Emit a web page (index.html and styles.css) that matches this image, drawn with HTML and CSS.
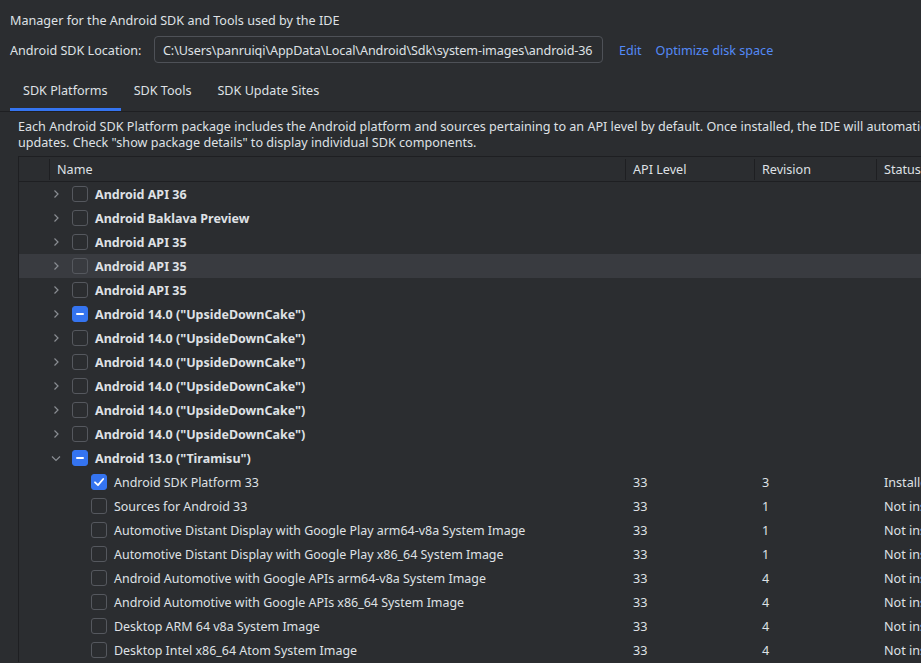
FILE: index.html
```html
<!DOCTYPE html>
<html lang="en">
<head>
<meta charset="utf-8">
<title>Android SDK</title>
<link rel="stylesheet" href="styles.css">
</head>
<body>
<div class="window">
  <p class="intro">Manager for the Android SDK and Tools used by the IDE</p>
  <div class="loc-row">
    <span class="loc-label">Android SDK Location:</span>
    <div class="path">C:\Users\panruiqi\AppData\Local\Android\Sdk\system-images\android-36</div>
    <a class="link edit">Edit</a>
    <a class="link">Optimize disk space</a>
  </div>
  <div class="tabs">
    <div class="tab active">SDK Platforms</div>
    <div class="tab">SDK Tools</div>
    <div class="tab">SDK Update Sites</div>
  </div>
  <p class="desc">Each Android SDK Platform package includes the Android platform and sources pertaining to an API level by default. Once installed, the IDE will automatically check for updates. Check "show package details" to display individual SDK components.</p>
  <div class="table">
    <div class="row head">
      <div class="hcell first"></div>
      <div class="hcell">Name</div>
      <div class="hcell">API Level</div>
      <div class="hcell">Revision</div>
      <div class="hcell">Status</div>
    </div>

    <div class="row">
      <div></div>
      <div class="name group"><svg class="chev" viewBox="0 0 12 12"><path d="M4.5 2.5 L8 6 L4.5 9.5"/></svg><span class="cb"></span><b>Android API 36</b></div>
      <div></div><div></div><div></div>
    </div>
    <div class="row">
      <div></div>
      <div class="name group"><svg class="chev" viewBox="0 0 12 12"><path d="M4.5 2.5 L8 6 L4.5 9.5"/></svg><span class="cb"></span><b>Android Baklava Preview</b></div>
      <div></div><div></div><div></div>
    </div>
    <div class="row">
      <div></div>
      <div class="name group"><svg class="chev" viewBox="0 0 12 12"><path d="M4.5 2.5 L8 6 L4.5 9.5"/></svg><span class="cb"></span><b>Android API 35</b></div>
      <div></div><div></div><div></div>
    </div>
    <div class="row hover">
      <div></div>
      <div class="name group"><svg class="chev" viewBox="0 0 12 12"><path d="M4.5 2.5 L8 6 L4.5 9.5"/></svg><span class="cb"></span><b>Android API 35</b></div>
      <div></div><div></div><div></div>
    </div>
    <div class="row">
      <div></div>
      <div class="name group"><svg class="chev" viewBox="0 0 12 12"><path d="M4.5 2.5 L8 6 L4.5 9.5"/></svg><span class="cb"></span><b>Android API 35</b></div>
      <div></div><div></div><div></div>
    </div>
    <div class="row">
      <div></div>
      <div class="name group"><svg class="chev" viewBox="0 0 12 12"><path d="M4.5 2.5 L8 6 L4.5 9.5"/></svg><span class="cb on minus"></span><b>Android 14.0 ("UpsideDownCake")</b></div>
      <div></div><div></div><div></div>
    </div>
    <div class="row">
      <div></div>
      <div class="name group"><svg class="chev" viewBox="0 0 12 12"><path d="M4.5 2.5 L8 6 L4.5 9.5"/></svg><span class="cb"></span><b>Android 14.0 ("UpsideDownCake")</b></div>
      <div></div><div></div><div></div>
    </div>
    <div class="row">
      <div></div>
      <div class="name group"><svg class="chev" viewBox="0 0 12 12"><path d="M4.5 2.5 L8 6 L4.5 9.5"/></svg><span class="cb"></span><b>Android 14.0 ("UpsideDownCake")</b></div>
      <div></div><div></div><div></div>
    </div>
    <div class="row">
      <div></div>
      <div class="name group"><svg class="chev" viewBox="0 0 12 12"><path d="M4.5 2.5 L8 6 L4.5 9.5"/></svg><span class="cb"></span><b>Android 14.0 ("UpsideDownCake")</b></div>
      <div></div><div></div><div></div>
    </div>
    <div class="row">
      <div></div>
      <div class="name group"><svg class="chev" viewBox="0 0 12 12"><path d="M4.5 2.5 L8 6 L4.5 9.5"/></svg><span class="cb"></span><b>Android 14.0 ("UpsideDownCake")</b></div>
      <div></div><div></div><div></div>
    </div>
    <div class="row">
      <div></div>
      <div class="name group"><svg class="chev" viewBox="0 0 12 12"><path d="M4.5 2.5 L8 6 L4.5 9.5"/></svg><span class="cb"></span><b>Android 14.0 ("UpsideDownCake")</b></div>
      <div></div><div></div><div></div>
    </div>
    <div class="row">
      <div></div>
      <div class="name group"><svg class="chev" viewBox="0 0 12 12"><path d="M2 4.5 L6 8.5 L10 4.5"/></svg><span class="cb on minus"></span><b>Android 13.0 ("Tiramisu")</b></div>
      <div></div><div></div><div></div>
    </div>

    <div class="row">
      <div></div>
      <div class="name child"><span class="cb on"><svg viewBox="0 0 16 16"><path d="M4 8.3 L7 11.2 L12.2 5"/></svg></span>Android SDK Platform 33</div>
      <div class="cell">33</div><div class="cell">3</div><div class="cell">Installed</div>
    </div>
    <div class="row">
      <div></div>
      <div class="name child"><span class="cb"></span>Sources for Android 33</div>
      <div class="cell">33</div><div class="cell">1</div><div class="cell">Not installed</div>
    </div>
    <div class="row">
      <div></div>
      <div class="name child"><span class="cb"></span>Automotive Distant Display with Google Play arm64-v8a System Image</div>
      <div class="cell">33</div><div class="cell">1</div><div class="cell">Not installed</div>
    </div>
    <div class="row">
      <div></div>
      <div class="name child"><span class="cb"></span>Automotive Distant Display with Google Play x86_64 System Image</div>
      <div class="cell">33</div><div class="cell">1</div><div class="cell">Not installed</div>
    </div>
    <div class="row">
      <div></div>
      <div class="name child"><span class="cb"></span>Android Automotive with Google APIs arm64-v8a System Image</div>
      <div class="cell">33</div><div class="cell">4</div><div class="cell">Not installed</div>
    </div>
    <div class="row">
      <div></div>
      <div class="name child"><span class="cb"></span>Android Automotive with Google APIs x86_64 System Image</div>
      <div class="cell">33</div><div class="cell">4</div><div class="cell">Not installed</div>
    </div>
    <div class="row">
      <div></div>
      <div class="name child"><span class="cb"></span>Desktop ARM 64 v8a System Image</div>
      <div class="cell">33</div><div class="cell">4</div><div class="cell">Not installed</div>
    </div>
    <div class="row">
      <div></div>
      <div class="name child"><span class="cb"></span>Desktop Intel x86_64 Atom System Image</div>
      <div class="cell">33</div><div class="cell">4</div><div class="cell">Not installed</div>
    </div>
  </div>
</div>
</body>
</html>
```

FILE: styles.css
```css
* { box-sizing: border-box; }
html, body {
  margin: 0;
  padding: 0;
  background: #2b2d30;
}
body {
  font-family: "Noto Sans", "Liberation Sans", sans-serif;
  font-size: 12.6px;
  color: #dfe1e5;
}
.window {
  width: 921px;
  height: 663px;
  overflow: hidden;
  padding-left: 10px;
  padding-top: 13px;
}
.intro {
  margin: 0;
  line-height: 16px;
  height: 16px;
  white-space: nowrap;
}
.loc-row {
  margin-top: 7px;
  display: flex;
  align-items: center;
  height: 27px;
  white-space: nowrap;
}
.loc-label {
  width: 144px;
  flex: none;
  padding-top: 1px;
}
.path {
  width: 449px;
  flex: none;
  height: 27px;
  border: 1px solid #4e5157;
  border-radius: 4px;
  padding: 1px 0 0 8px;
  line-height: 25px;
  overflow: hidden;
  letter-spacing: -0.1px;
}
.link {
  color: #548af7;
  cursor: pointer;
  padding-top: 1px;
}
.link.edit {
  margin-left: 16px;
  margin-right: 14px;
}
.tabs {
  margin-top: 8px;
  margin-left: -10px;
  padding-left: 10px;
  display: flex;
  height: 41px;
  border-bottom: 1px solid #1e1f22;
}
.tab {
  padding: 2px 13px 0;
  line-height: 36px;
  height: 40px;
  border-bottom: 3px solid transparent;
  white-space: nowrap;
}
.tab.active { border-bottom-color: #3574f0; }
.desc {
  margin: 7px 0 0 8px;
  line-height: 16px;
  height: 32px;
  width: 1000px;
}
.table {
  margin: 5px 0 0 8px;
  width: 1000px;
  border-top: 1px solid #1e1f22;
  border-left: 1px solid #1e1f22;
}
.row {
  display: grid;
  grid-template-columns: 30px 576px 129px 122px 1fr;
  height: 24px;
  align-items: center;
  white-space: nowrap;
}
.row.head {
  border-bottom: 1px solid #1e1f22;
  height: 25px;
  align-items: stretch;
}
.hcell {
  border-left: 1px solid #1e1f22;
  margin: 2px 0 2px;
  padding-left: 7px;
  padding-top: 1px;
  line-height: 20px;
  color: #dfe1e5;
}
.hcell.first { border-left: none; }
.row.hover { background: #393b40; }
.cell { padding-left: 8px; }
.name {
  display: flex;
  align-items: center;
  height: 24px;
}
.name.group { padding-left: 1px; }
.name.child {
  padding-left: 42px;
  font-size: 12.45px;
}
.name b {
  font-weight: 700;
  font-size: 12.5px;
}
.chev {
  width: 12px;
  height: 12px;
  margin-right: 10px;
  fill: none;
  stroke: #8a8d93;
  stroke-width: 1.2;
}
.cb {
  width: 16px;
  height: 16px;
  border: 1px solid #55585e;
  border-radius: 3px;
  margin-right: 7px;
  flex: none;
  display: flex;
  align-items: center;
  justify-content: center;
}
.cb.on {
  background: #3574f0;
  border-color: #3574f0;
}
.cb.minus::after {
  content: "";
  width: 8px;
  height: 2px;
  background: #ffffff;
  border-radius: 1px;
}
.cb svg {
  width: 16px;
  height: 16px;
  fill: none;
  stroke: #ffffff;
  stroke-width: 1.8;
  stroke-linecap: round;
  stroke-linejoin: round;
  flex: none;
}
```
